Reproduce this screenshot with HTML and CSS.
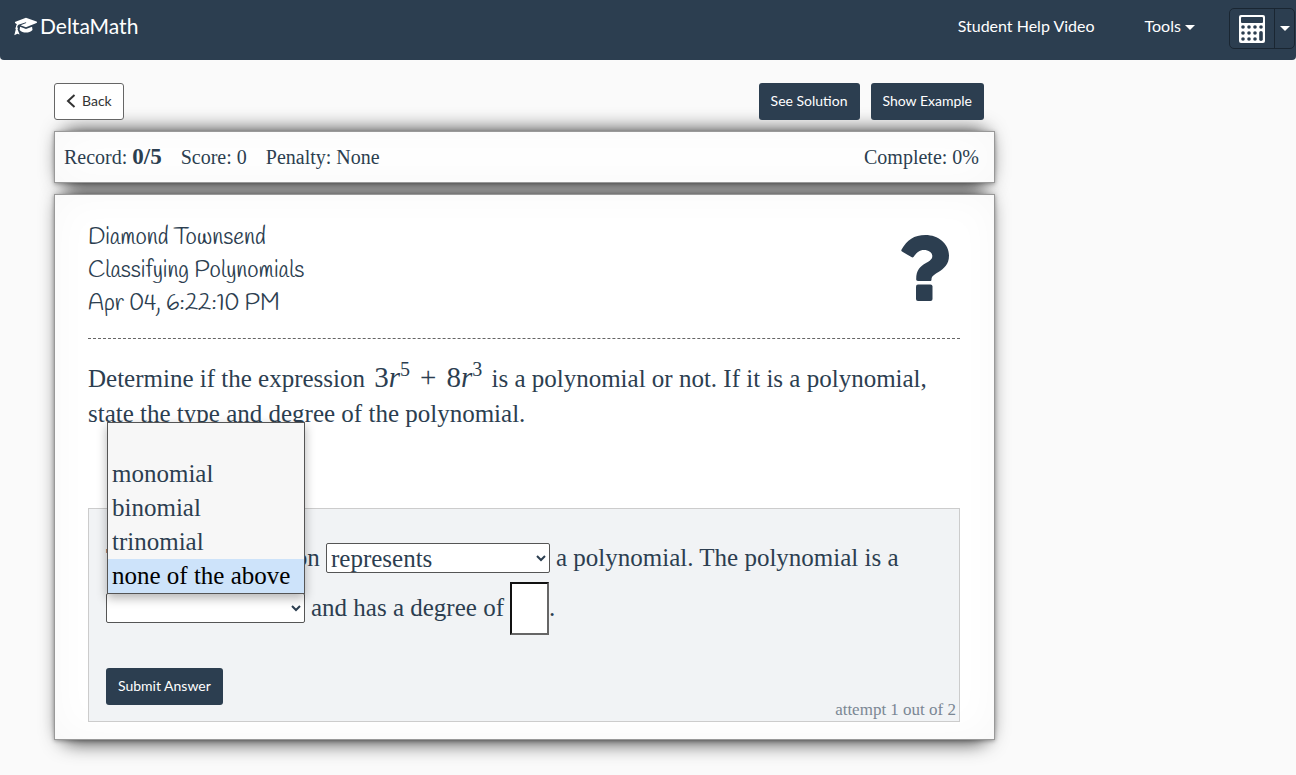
FILE: index.html
```html
<!DOCTYPE html>
<html lang="en">
<head>
  <meta charset="UTF-8">
  <meta name="viewport" content="width=device-width, initial-scale=1.0">
  <title>DeltaMath</title>
  <link rel="stylesheet" href="styles.css">
</head>
<body>

  <nav class="navbar">
    <a class="brand" href="#">
      <svg class="brand-icon" viewBox="0 0 24 20" aria-hidden="true">
        <path d="M12.500.8 23.600 4.800a.8.8 0 0 1 0 1.500L12.500 10.800 6.800 8.800l6-2.500-.3-.8L4.600 8.200C3.700 9 3.400 9.800 3.300 10.800c.9.500.9 1.500.3 2.100L5.800 18.500l-2.300-.8L.2 19.200l1.600-6.200c-.7-.6-.6-1.700.1-2.200 0-1.300.3-2.300 1-3.200L1.400 6.500a.8.8 0 0 1 0-1.500z"/>
        <path d="M6.300 10.200l6.200 2.400 6.400-2.400.5 3.400c-2 1.900-4.300 2.800-6.900 2.800s-4.900-1-6.700-2.800z"/>
      </svg>
      <span>DeltaMath</span>
    </a>
    <div class="nav-links">
      <a href="#">Student Help Video</a>
      <a href="#">Tools <span class="caret"></span></a>
      <div class="calc-group">
        <button type="button" class="calc" aria-label="Calculator">
          <svg viewBox="0 0 26 28" width="26" height="28" aria-hidden="true">
            <rect x="0" y="0" width="26" height="28" rx="2" fill="#fff"/>
            <rect x="2" y="2" width="22" height="6" rx="1" fill="#2c3e50"/>
            <g fill="#2c3e50">
              <circle cx="4" cy="12" r="1.800"/><circle cx="10" cy="12" r="1.800"/><circle cx="16" cy="12" r="1.800"/><circle cx="22" cy="12" r="1.800"/>
              <circle cx="4" cy="18" r="1.800"/><circle cx="10" cy="18" r="1.800"/><circle cx="16" cy="18" r="1.800"/>
              <circle cx="4" cy="24" r="1.800"/><circle cx="10" cy="24" r="1.800"/><circle cx="16" cy="24" r="1.800"/>
              <rect x="20.200" y="16" width="3.600" height="10" rx="1.800"/>
            </g>
          </svg>
        </button>
        <button type="button" class="calc-toggle" aria-label="Calculator options"><span class="caret"></span></button>
      </div>
    </div>
  </nav>

  <main class="container">
    <div class="toolbar">
      <button type="button" class="btn btn-light">
        <svg viewBox="0 0 10 14" width="10" height="14" aria-hidden="true"><path d="M8.500 1 2 7l6.500 6" fill="none" stroke="#333" stroke-width="2"/></svg>
        Back
      </button>
      <div class="toolbar-right">
        <button type="button" class="btn">See Solution</button>
        <button type="button" class="btn">Show Example</button>
      </div>
    </div>

    <section class="paper record">
      <span>Record: <b>0/5</b></span>
      <span>Score: 0</span>
      <span>Penalty: None</span>
      <span class="complete">Complete: 0%</span>
    </section>

    <section class="paper problem">
      <header class="problem-head">
        <div class="student">
          <div>Diamond Townsend</div>
          <div>Classifying Polynomials</div>
          <div>Apr 04, 6:22:10 PM</div>
        </div>
        <svg class="question" viewBox="0 0 48 66" width="48" height="66" aria-hidden="true">
          <path d="M.6 14.500C6 5 13 0 24.500 0 37 0 48 8.500 48 20.500c0 9-5 13-10.500 16.500-5 3-7 4.500-7 7.500 0 1-.6 1.500-1.500 1.500H17c-1.200 0-1.800-.6-1.800-1.700C15.200 35 19 31.500 25 28c4-2.300 6.300-3.700 6.300-7 0-3.600-3.800-6-8.300-6-5 0-7.300 2.700-10.300 6.700-.7.900-1.500 1-2.300.4L1 16.500c-.8-.6-.9-1.200-.4-2z"/>
          <rect x="15" y="49.500" width="16.500" height="16.500" rx="2"/>
        </svg>
      </header>

      <p class="prompt">Determine if the expression <span class="math">3<i>r</i><sup>5</sup><span class="op">+</span>8<i>r</i><sup>3</sup></span> is a polynomial or not. If it is a polynomial, state the type and degree of the polynomial.</p>

      <form class="answer">
        <div class="answer-row">
          <label class="given" for="represents">The given expression</label>
          <select id="represents" class="pick pick-wide">
            <option>represents</option>
          </select>
          <span>a polynomial. The polynomial is a</span>
        </div>
        <div class="answer-row">
          <div class="type-pick">
            <select id="type" class="pick" aria-label="Polynomial type">
              <option></option>
            </select>
            <ul class="menu" role="listbox" aria-label="Polynomial type">
              <li role="option" aria-selected="false"></li>
              <li role="option" aria-selected="false">monomial</li>
              <li role="option" aria-selected="false">binomial</li>
              <li role="option" aria-selected="false">trinomial</li>
              <li role="option" aria-selected="true" class="active">none of the above</li>
            </ul>
          </div>
          <label for="degree">and has a degree of</label>
          <span class="degree-wrap"><input id="degree" class="degree" type="text">.</span>
        </div>
        <div class="answer-foot">
          <button type="submit" class="btn">Submit Answer</button>
          <span class="attempt">attempt 1 out of 2</span>
        </div>
      </form>
    </section>
  </main>

</body>
</html>
```
FILE: styles.css
```css
* { box-sizing: border-box; }
body {
  margin: 0;
  min-height: 100vh;
  background: #fafafa;
  color: #2c3e50;
  font-family: Georgia, "Liberation Serif", serif;
}
button { font-family: Lato, sans-serif; cursor: pointer; }

/* top bar */
.navbar {
  display: flex;
  justify-content: space-between;
  align-items: flex-start;
  height: 60px;
  padding: 8px 1px 0 14px;
  background: #2c3e50;
  border-radius: 0 0 4px 4px;
  font-family: Lato, sans-serif;
}
.navbar a { color: #fff; text-decoration: none; }
.brand {
  display: flex;
  align-items: center;
  gap: 3px;
  font-size: 21px;
  line-height: 36px;
}
.brand-icon { width: 23px; height: 19px; fill: #fff; }
.nav-links {
  display: flex;
  font-size: 16px;
  line-height: 36px;
}
.nav-links > a { margin-right: 50px; }
.nav-links > a + a { margin-right: 34px; }
.caret {
  display: inline-block;
  border: 5px solid transparent;
  border-top-color: #fff;
  border-bottom: 0;
  vertical-align: middle;
}
.calc-group {
  display: flex;
  width: 66px;
  height: 41px;
  border: 1px solid #1a2632;
  border-radius: 5px;
}
.calc-group button {
  display: flex;
  align-items: center;
  justify-content: center;
  padding: 0;
  border: 0;
  background: none;
}
.calc { flex: 1; }
.calc-group .calc-toggle { width: 20px; border-left: 1px solid #1a2632; }

.container {
  max-width: 1049px;
  padding: 23px 54px 35px;
  isolation: isolate;
}
.toolbar { display: flex; justify-content: space-between; }
.toolbar-right { display: flex; gap: 11px; margin-right: 11px; }
.btn {
  height: 37px;
  padding: 0 12px 2px;
  border: 0;
  border-radius: 3px;
  background: #2c3e50;
  color: #fff;
  font-size: 14px;
}
.btn-light {
  display: flex;
  align-items: center;
  gap: 6px;
  padding: 0 11px 2px;
  border: 1px solid #666;
  background: #fff;
  color: #333;
}

/* sheets with a lifted shadow */
.paper {
  position: relative;
  border: 1px solid #999;
  background: #fff;
  box-shadow: 0 1px 4px rgba(0,0,0,0.3), inset 0 0 40px rgba(0,0,0,0.03);
}
.paper::before {
  content: "";
  position: absolute;
  z-index: -1;
  inset: 0 8px;
  border-radius: 10px;
  box-shadow: 0 1px 20px 2px rgba(0,0,0,0.8);
}
.record {
  display: flex;
  align-items: center;
  gap: 19px;
  height: 52px;
  margin: 11px 0;
  padding: 0 15px 0 9px;
  font-size: 20px;
}
.record b { font-size: 23px; }
.complete { margin-left: auto; }

.problem { padding: 27px 34px 17px 33px; }
.problem-head {
  display: flex;
  justify-content: space-between;
  align-items: flex-start;
  padding-bottom: 17px;
  border-bottom: 1px dashed #666;
}
.student {
  font-family: Handlee, Lato, sans-serif;
  font-weight: 300;
  font-size: 23px;
  line-height: 33px;
}
.question { margin: 13px 11px 0 0; fill: #2c3e50; }
.prompt {
  margin: 22px 0 77px;
  font-size: 25px;
  line-height: 35px;
}
.math { margin: 0 3px; font-size: 29px; line-height: 1; white-space: nowrap; }
.math sup { font-size: 20px; line-height: 0; }
.op { margin: 0 10px; }

.answer {
  padding: 24px 3px 0 17px;
  border: 1px solid #ccc;
  background: #f1f3f5;
  font-size: 25px;
}
.answer-row {
  display: flex;
  align-items: center;
  gap: 6px;
  height: 50px;
}
.given { width: 214px; }
.pick {
  width: 199px;
  height: 30px;
  padding: 0;
  border: 1px solid #555;
  border-radius: 2px;
  background: #fff;
  color: #2c3e50;
  font-family: inherit;
  font-size: 25px;
}
.pick-wide { width: 224px; }
.type-pick { position: relative; display: flex; }
.menu {
  position: absolute;
  left: 1px;
  bottom: 29px;
  width: 198px;
  margin: 0;
  padding: 0;
  list-style: none;
  border: 1px solid #555;
  background: #f7f7f7;
  box-shadow: 0 4px 10px rgba(0,0,0,0.3);
}
.menu li { height: 34px; padding-left: 4px; line-height: 34px; white-space: nowrap; }
.menu .active { background: #cde3fa; color: #000; }
.degree-wrap { display: flex; align-items: center; }
.degree {
  width: 39px;
  height: 53px;
  padding: 4px;
  border: 2px inset #666;
  background: #fff;
  font: inherit;
}
.answer-foot {
  display: flex;
  justify-content: space-between;
  align-items: flex-end;
  margin-top: 35px;
}
.answer-foot .btn { margin-bottom: 16px; }
.attempt { font-size: 17px; line-height: 22px; color: #7b8794; }
```
